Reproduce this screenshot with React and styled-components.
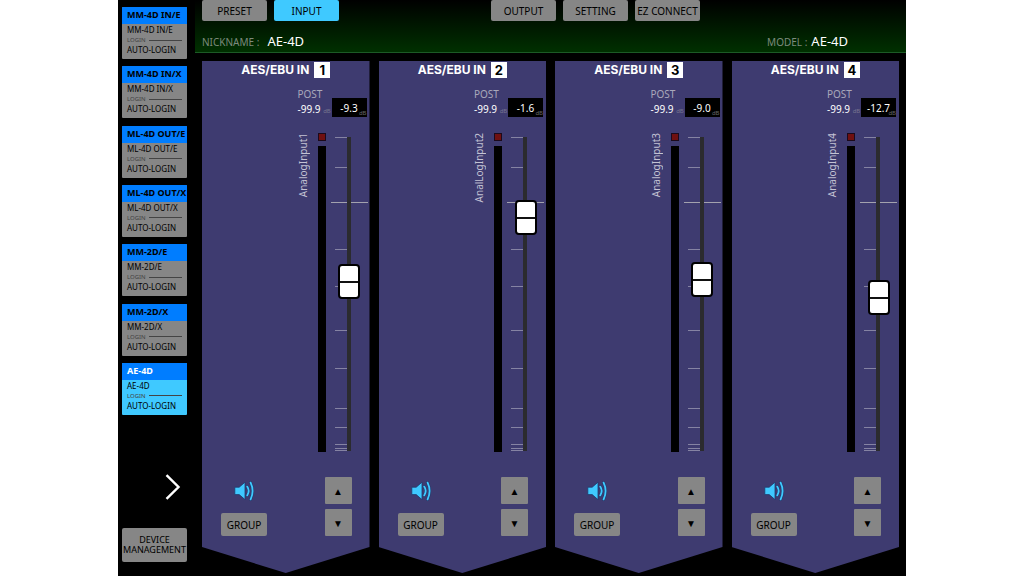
import React, { useState } from 'react';
import styled, { createGlobalStyle } from 'styled-components';

const devices = [
  { id: 1, title: 'MM-4D IN/E' },
  { id: 2, title: 'MM-4D IN/X' },
  { id: 3, title: 'ML-4D OUT/E' },
  { id: 4, title: 'ML-4D OUT/X' },
  { id: 5, title: 'MM-2D/E' },
  { id: 6, title: 'MM-2D/X' },
  { id: 7, title: 'AE-4D' },
];

const inputs = [
  { number: 1, name: 'AnalogInput1', level: '-9.3', position: 545 },
  { number: 2, name: 'AnalLogInput2', level: '-1.6', position: 772 },
  { number: 3, name: 'AnalogInput3', level: '-9.0', position: 552 },
  { number: 4, name: 'AnalogInput4', level: '-12.7', position: 484 },
];

const ticks = [0, 30, 112, 149, 193, 231, 271, 290, 307, 311, 313];

const DeviceCard = ({ device, active, onSelect }) => (
  <Card type="button" $active={active} onClick={() => onSelect(device.id)}>
    <CardTitle $active={active}>{device.title}</CardTitle>
    <CardLine>{device.title}</CardLine>
    <CardLogin>LOGIN</CardLogin>
    <CardLine>AUTO-LOGIN</CardLine>
  </Card>
);

const SpeakerIcon = () => (
  <svg width="20" height="20" viewBox="0 0 20 20" aria-hidden="true">
    <path
      d="M.8 6.2h4.4L11 1.2v17.4l-5.8-5H.8z"
      fill="#3fc9ff"
      stroke="#1f3a6c"
      strokeWidth="0.8"
      strokeLinejoin="round"
    />
    <g fill="none" strokeLinecap="round">
      <path d="M13.2 5.6q3 4.3 0 8.8" stroke="#1f3a6c" strokeWidth="2.8" />
      <path d="M16.6 1.6q4 8.3 0 16.8" stroke="#1f3a6c" strokeWidth="2.8" />
      <path d="M13.2 5.6q3 4.3 0 8.8" stroke="#3fc9ff" strokeWidth="1.8" />
      <path d="M16.6 1.6q4 8.3 0 16.8" stroke="#3fc9ff" strokeWidth="1.8" />
    </g>
  </svg>
);

const Scale = () => (
  <ScaleSvg width="37" height="315" viewBox="0 0 37 315" aria-hidden="true">
    {ticks.map((y) => (
      <rect key={y} x="4" y={y} width="12" height="1" fill="#8583a3" />
    ))}
    <rect x="0" y="65" width="37" height="1" fill="#a3a2ae" />
    <rect x="16" y="0" width="4" height="314" fill="#2b2b2f" />
  </ScaleSvg>
);

const ChannelStrip = ({ input }) => {
  const [position, setPosition] = useState(input.position);

  return (
    <Strip>
      <StripTitle>
        AES/EBU IN <StripNumber>{input.number}</StripNumber>
      </StripTitle>
      <Readouts>
        <Post>
          <PostLabel>POST</PostLabel>
          <PostValue>
            -99.9 <Unit>dB</Unit>
          </PostValue>
        </Post>
        <Level>
          {input.level}
          <LevelUnit>dB</LevelUnit>
        </Level>
      </Readouts>
      <FaderRow>
        <InputName htmlFor={`fader-${input.number}`}>{input.name}</InputName>
        <Meter>
          <Led />
          <MeterBar />
        </Meter>
        <Fader>
          <Scale />
          <FaderInput
            id={`fader-${input.number}`}
            type="range"
            min="0"
            max="1000"
            value={position}
            onChange={(e) => setPosition(Number(e.target.value))}
          />
        </Fader>
      </FaderRow>
      <StripFooter>
        <FooterLeft>
          <MuteButton type="button" aria-label="Mute">
            <SpeakerIcon />
          </MuteButton>
          <GroupButton type="button">GROUP</GroupButton>
        </FooterLeft>
        <FooterRight>
          <StepButton type="button">▲</StepButton>
          <StepButton type="button">▼</StepButton>
        </FooterRight>
      </StripFooter>
    </Strip>
  );
};

const App = () => {
  const [device, setDevice] = useState(7);
  const [tab, setTab] = useState('INPUT');

  const renderTab = (label) => (
    <Tab
      key={label}
      type="button"
      $active={tab === label}
      onClick={() => setTab(label)}
    >
      {label}
    </Tab>
  );

  return (
    <>
      <GlobalStyle />
      <Page>
        <Sidebar>
          <DeviceList>
            {devices.map((d) => (
              <DeviceCard
                key={d.id}
                device={d}
                active={d.id === device}
                onSelect={setDevice}
              />
            ))}
          </DeviceList>
          <SidebarBottom>
            <NextButton type="button" aria-label="Next">
              <svg width="16" height="26" viewBox="0 0 16 26">
                <path
                  d="M1.5 1.2L13.5 13L1.5 24.8"
                  fill="none"
                  stroke="#fff"
                  strokeWidth="2.4"
                />
              </svg>
            </NextButton>
            <ManageButton type="button">DEVICE MANAGEMENT</ManageButton>
          </SidebarBottom>
        </Sidebar>
        <Main>
          <Header>
            <Tabs>
              <TabGroup>{['PRESET', 'INPUT'].map(renderTab)}</TabGroup>
              <TabGroup>
                {['OUTPUT', 'SETTING', 'EZ CONNECT'].map(renderTab)}
              </TabGroup>
            </Tabs>
            <Info>
              <InfoItem $gap="8px">
                NICKNAME : <strong>AE-4D</strong>
              </InfoItem>
              <InfoItem $gap="4px">
                MODEL : <strong>AE-4D</strong>
              </InfoItem>
            </Info>
          </Header>
          <Strips>
            {inputs.map((input) => (
              <ChannelStrip key={input.number} input={input} />
            ))}
          </Strips>
        </Main>
      </Page>
    </>
  );
};

const GlobalStyle = createGlobalStyle`
  * {
    box-sizing: border-box;
  }

  body {
    margin: 0;
    background: #fff;
    font-family: 'Noto Sans', 'Open Sans', sans-serif;
  }

  button {
    padding: 0;
    border: none;
    font-family: inherit;
    color: #000;
    cursor: pointer;
  }
`;

const Page = styled.div`
  display: flex;
  max-width: 788px;
  min-height: 100vh;
  margin: 0 auto;
  background: #000;
`;

const Sidebar = styled.aside`
  display: flex;
  flex-direction: column;
  justify-content: space-between;
  flex: 0 0 77px;
  padding: 7px 8px 14px 4px;
`;

const DeviceList = styled.div`
  display: flex;
  flex-direction: column;
  justify-content: space-between;
  min-height: 408px;
`;

const Card = styled.button`
  display: flex;
  flex-direction: column;
  justify-content: flex-start;
  width: 65px;
  height: 52px;
  border-radius: 1px;
  overflow: hidden;
  text-align: left;
  white-space: nowrap;
  background: ${(props) => (props.$active ? '#3fc9ff' : '#868686')};
`;

const CardTitle = styled.div`
  flex: 0 0 17px;
  padding-left: 5px;
  line-height: 16px;
  font-size: 9px;
  font-weight: 700;
  background: #007dff;
  color: ${(props) => (props.$active ? '#fff' : '#000')};
`;

const CardLine = styled.div`
  padding-left: 5px;
  line-height: 12px;
  font-size: 8px;
`;

const CardLogin = styled.div`
  display: flex;
  align-items: center;
  gap: 3px;
  padding: 0 5px;
  line-height: 8px;
  font-size: 6px;
  color: #444;

  &::after {
    content: '';
    flex: 1;
    height: 1px;
    background: #444;
  }
`;

const SidebarBottom = styled.div`
  display: flex;
  flex-direction: column;
  align-items: flex-end;
  gap: 28px;
`;

const NextButton = styled.button`
  display: flex;
  margin-right: 6px;
  background: none;
`;

const ManageButton = styled.button`
  width: 65px;
  height: 34px;
  border-radius: 2px;
  background: #868686;
  font-size: 9px;
  line-height: 10px;
`;

const Main = styled.main`
  display: flex;
  flex-direction: column;
  flex: 1;
`;

const Header = styled.header`
  height: 53px;
  border-bottom: 1px solid #1c5a26;
  background: linear-gradient(#000, #003000);
`;

const Tabs = styled.nav`
  display: flex;
  gap: 152px;
  padding-left: 7px;
`;

const TabGroup = styled.div`
  display: flex;
  gap: 7px;
`;

const Tab = styled.button`
  width: 65px;
  height: 21px;
  border-radius: 2px;
  background: ${(props) => (props.$active ? '#3fc9ff' : '#868686')};
  font-size: 10px;
  white-space: nowrap;
`;

const Info = styled.div`
  display: flex;
  justify-content: space-between;
  padding: 11px 58px 0 7px;
`;

const InfoItem = styled.div`
  display: flex;
  align-items: baseline;
  gap: ${(props) => props.$gap};
  line-height: 18px;
  font-size: 10px;
  color: #7d8a7d;

  strong {
    font-size: 13px;
    font-weight: 400;
    color: #fff;
  }
`;

const Strips = styled.div`
  display: grid;
  grid-template-columns: repeat(4, 1fr);
  gap: 9px;
  flex: 1;
  padding: 8px 7px 3px;
`;

const Strip = styled.section`
  display: flex;
  flex-direction: column;
  padding: 1px 2px 37px;
  background: #3e3b70;
  clip-path: polygon(
    0 0,
    100% 0,
    100% calc(100% - 26px),
    50% 100%,
    0 calc(100% - 26px)
  );
`;

const StripTitle = styled.h2`
  display: flex;
  justify-content: center;
  gap: 5px;
  margin: 0 0 10px;
  line-height: 16px;
  font-family: Inter, 'Noto Sans', sans-serif;
  font-size: 12px;
  font-weight: 700;
  color: #fff;
`;

const StripNumber = styled.span`
  width: 16px;
  background: #fff;
  color: #000;
  font-size: 13px;
  text-align: center;
`;

const Readouts = styled.div`
  display: flex;
  justify-content: flex-end;
  align-items: flex-end;
  gap: 1px;
  margin: 0 1px 16px 0;
`;

const Post = styled.div`
  width: 33px;
  font-size: 10px;
  white-space: nowrap;
`;

const PostLabel = styled.div`
  line-height: 13px;
  color: #a9a8bb;
`;

const PostValue = styled.div`
  height: 16px;
  line-height: 16px;
  color: #fff;
`;

const Unit = styled.small`
  font-size: 6px;
  color: #77758f;
`;

const Level = styled.div`
  position: relative;
  width: 35px;
  height: 19px;
  background: #000;
  color: #fff;
  font-size: 10px;
  line-height: 20px;
  text-align: center;
`;

const LevelUnit = styled.small`
  position: absolute;
  right: 0;
  bottom: 0;
  font-size: 6px;
  line-height: 8px;
  color: #666;
`;

const FaderRow = styled.div`
  display: flex;
  justify-content: flex-end;
  align-items: flex-start;
`;

const InputName = styled.label`
  writing-mode: vertical-rl;
  transform: rotate(180deg);
  margin-right: 8px;
  line-height: 14px;
  font-size: 10px;
  color: #c4c3d4;
`;

const Meter = styled.div`
  display: flex;
  flex-direction: column;
  gap: 5px;
  width: 8px;
  margin-right: 5px;
`;

const Led = styled.div`
  height: 8px;
  border: 1px solid #1c0a1c;
  background: #701010;
`;

const MeterBar = styled.div`
  height: 306px;
  background: #000;
`;

const Fader = styled.div`
  display: grid;
  justify-items: center;
  margin-top: 4px;
`;

const ScaleSvg = styled.svg`
  grid-area: 1 / 1;
`;

const FaderInput = styled.input`
  grid-area: 1 / 1;
  width: 22px;
  height: 313px;
  margin: 0;
  appearance: none;
  background: none;
  writing-mode: vertical-lr;
  direction: rtl;
  cursor: pointer;

  &::-webkit-slider-thumb {
    appearance: none;
    box-sizing: border-box;
    width: 22px;
    height: 35px;
    border: 2px solid #000;
    border-radius: 4px;
    background: linear-gradient(
      #fff 0 15px,
      #111 15px 17px,
      #fff 17px
    );
  }
`;

const StripFooter = styled.div`
  display: flex;
  justify-content: space-between;
  margin-top: auto;
  padding: 0 16px 0 17px;
`;

const FooterLeft = styled.div`
  display: flex;
  flex-direction: column;
  justify-content: space-between;
  align-items: center;
  padding-top: 4px;
`;

const FooterRight = styled.div`
  display: flex;
  flex-direction: column;
  gap: 5px;
`;

const MuteButton = styled.button`
  display: flex;
  background: none;
`;

const GroupButton = styled.button`
  width: 46px;
  height: 23px;
  border-radius: 2px;
  background: #868686;
  font-size: 10px;
`;

const StepButton = styled.button`
  width: 27px;
  height: 27px;
  border-radius: 1px;
  background: #868686;
  font-size: 10px;
`;

export default App;
